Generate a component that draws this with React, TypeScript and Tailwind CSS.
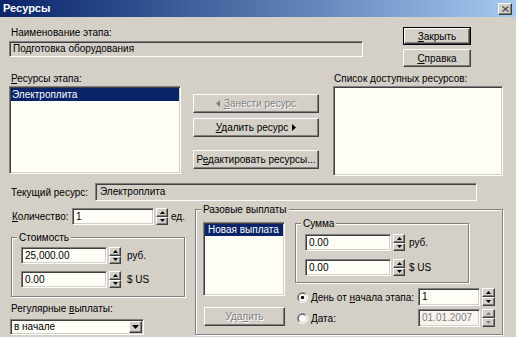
import React from "react";

const sunken =
  "border border-t-[#808080] border-l-[#808080] border-b-white border-r-white shadow-[inset_1px_1px_0_#404040,inset_-1px_-1px_0_#d4d0c8]";
const raised =
  "border border-t-white border-l-white border-b-[#404040] border-r-[#404040] shadow-[inset_-1px_-1px_0_#808080] bg-[#d4d0c8]";
const off = "text-[#808080] [text-shadow:1px_1px_0_#fff]";

function Btn({ className, children, disabled }: { className: string; children: React.ReactNode; disabled?: boolean }) {
  return (
    <div className={`${raised} ${className} flex items-center justify-center ${disabled ? off : ""}`}>
      {children}
    </div>
  );
}

function Tri({ dir, color }: { dir: "up" | "down" | "left" | "right"; color: string }) {
  const d = {
    up: "M3.5 0L7 4H0z",
    down: "M0 0H7L3.5 4z",
    left: "M4 0V7L0 3.5z",
    right: "M0 0L4 3.5L0 7z",
  }[dir];
  const vert = dir === "up" || dir === "down";
  return (
    <svg width={vert ? 7 : 4} height={vert ? 4 : 7} viewBox={vert ? "0 0 7 4" : "0 0 4 7"}>
      <path d={d} fill={color} />
    </svg>
  );
}

function Spin({ className, disabled }: { className: string; disabled?: boolean }) {
  const c = disabled ? "#808080" : "#000";
  return (
    <div className={`flex flex-col ${className}`}>
      <div className={`flex-1 ${raised} flex items-center justify-center`}>
        <svg width="5" height="3" viewBox="0 0 5 3"><path d="M2.5 0L5 3H0z" fill={c} /></svg>
      </div>
      <div className={`flex-1 ${raised} flex items-center justify-center`}>
        <svg width="5" height="3" viewBox="0 0 5 3"><path d="M0 0H5L2.5 3z" fill={c} /></svg>
      </div>
    </div>
  );
}

function Radio({ checked }: { checked?: boolean }) {
  return (
    <svg width="11" height="11" viewBox="0 0 12 12">
      <circle cx="6" cy="6" r="5.5" fill="#fff" />
      <path d="M2.1 9.9A5.5 5.5 0 0 1 9.9 2.1" stroke="#808080" fill="none" />
      <path d="M9.9 2.1A5.5 5.5 0 0 1 2.1 9.9" stroke="#fff" fill="none" />
      <path d="M2.8 9.2A4.5 4.5 0 0 1 9.2 2.8" stroke="#404040" fill="none" />
      <path d="M9.2 2.8A4.5 4.5 0 0 1 2.8 9.2" stroke="#d4d0c8" fill="none" />
      {checked && <circle cx="6" cy="6" r="1.8" fill="#000" />}
    </svg>
  );
}

function Group({ className, label, children }: { className: string; label: string; children: React.ReactNode }) {
  return (
    <div className={`relative border border-[#808080] shadow-[inset_1px_1px_0_#fff,1px_1px_0_#fff] ${className}`}>
      <span className="absolute -top-[7px] left-[5px] bg-[#d4d0c8] px-[2px] leading-[13px]">{label}</span>
      {children}
    </div>
  );
}

export default function App() {
  return (
    <div className="w-[516px] h-[337px] overflow-hidden bg-[#d4d0c8] font-['Liberation_Sans',Arial,sans-serif] text-[10px] leading-[13px] text-black whitespace-nowrap select-none">
      {/* title bar */}
      <div className="h-[17px] flex items-center justify-between bg-linear-to-r from-[#0a246a] to-[#a6caf0] pl-[3px] pr-[4px]">
        <span className="font-bold text-white text-[11px]">Ресурсы</span>
        <div className={`${raised} w-[14px] h-[12px] flex items-center justify-center`}>
          <svg width="7" height="6" viewBox="0 0 7 6">
            <path d="M0.5 0.5L6.5 5.5M6.5 0.5L0.5 5.5" stroke="#505050" strokeWidth="1.4" />
          </svg>
        </div>
      </div>

      {/* name of stage + buttons */}
      <div className="flex h-[50px]">
        <div className="ml-[9px] w-[354px] pt-[9px]">
          <div className="pl-[2px] h-[13px]">Наименование этапа:</div>
          <div className={`mt-[2px] h-[16px] ${sunken} pl-[3px] leading-[14px]`}>Подготовка оборудования</div>
        </div>
        <div className="ml-[40px] pt-[10px] flex flex-col gap-[4px]">
          <div className="border border-black w-[68px] h-[18px] flex">
            <Btn className="flex-1">
              <span><u>З</u>акрыть</span>
            </Btn>
          </div>
          <Btn className="w-[68px] h-[18px]">
            <span><u>С</u>правка</span>
          </Btn>
        </div>
      </div>

      {/* resource lists */}
      <div className="flex h-[109px]">
        <div className="ml-[9px] w-[172px] pt-[5px]">
          <div className="pl-[2px] h-[13px]"><u>Р</u>есурсы этапа:</div>
          <div className={`mt-[1px] h-[88px] ${sunken} bg-[#fffef7] p-[1px]`}>
            <div className="bg-[#0a246a] text-white pl-[1px] h-[13px]">Электроплита</div>
          </div>
        </div>
        <div className="ml-[12px] w-[126px] pt-[27px] flex flex-col">
          <Btn className="h-[19px] gap-[4px]" disabled>
            <Tri dir="left" color="#808080" />
            <span><u>З</u>анести ресурс</span>
          </Btn>
          <Btn className="h-[19px] mt-[5px] gap-[4px]">
            <span><u>У</u>далить ресурс</span>
            <Tri dir="right" color="#000" />
          </Btn>
          <Btn className="h-[19px] mt-[13px]">
            <span>Р<u>е</u>дактировать ресурсы...</span>
          </Btn>
        </div>
        <div className="ml-[14px] w-[170px] pt-[5px]">
          <div className="pl-[1px] h-[13px]">Список доступных ресурсов:</div>
          <div className={`mt-[1px] h-[90px] ${sunken} bg-[#fffef7]`} />
        </div>
      </div>

      {/* current resource */}
      <div className="flex items-center mt-[7px] h-[18px]">
        <div className="ml-[11px] w-[84px]">Текущий ресурс:</div>
        <div className={`w-[382px] h-[18px] ${sunken} pl-[4px] leading-[16px]`}>Электроплита</div>
      </div>

      {/* bottom */}
      <div className="flex">
        <div className="ml-[9px] w-[177px]">
          <div className="flex items-center mt-[7px] h-[17px]">
            <div className="ml-[3px] w-[60px]"><u>К</u>оличество:</div>
            <div className={`w-[82px] h-[17px] ${sunken} bg-[#fffef7] pl-[3px] leading-[15px]`}>1</div>
            <Spin className="ml-[2px] w-[12px] h-[17px]" />
            <span className="ml-[3px]">ед.</span>
          </div>
          <Group className="mt-[12px] ml-[2px] w-[174px] h-[60px] pt-[9px] pl-[9px]" label="Стоимость">
            <div className="flex items-center h-[17px]">
              <div className={`w-[86px] h-[17px] ${sunken} bg-[#fffef7] pl-[3px] leading-[15px]`}>25,000.00</div>
              <Spin className="ml-[2px] w-[12px] h-[17px]" />
              <span className="ml-[6px]">руб.</span>
            </div>
            <div className="flex items-center h-[17px] mt-[7px]">
              <div className={`w-[86px] h-[17px] ${sunken} bg-[#fffef7] pl-[3px] leading-[15px]`}>0.00</div>
              <Spin className="ml-[2px] w-[12px] h-[17px]" />
              <span className="ml-[6px]">$ US</span>
            </div>
          </Group>
          <div className="mt-[5px] ml-[2px] h-[13px]">Регулярные <u>в</u>ыплаты:</div>
          <div className={`mt-[4px] ml-[1px] w-[134px] h-[16px] ${sunken} bg-[#fffef7] flex items-stretch p-[1px]`}>
            <div className="flex-1 pl-[2px] leading-[12px]">в начале</div>
            <div className={`w-[13px] ${raised} flex items-center justify-center`}>
              <Tri dir="down" color="#000" />
            </div>
          </div>
        </div>

        <Group className="mt-[8px] ml-[9px] w-[308px] h-[126px] flex" label="Разовые выплаты">
          <div className="pl-[7px] pt-[12px]">
            <div className={`w-[82px] h-[74px] ${sunken} bg-[#fffef7] p-[1px]`}>
              <div className="bg-[#0a246a] text-white pl-[3px] h-[12px] leading-[12px]">Новая выплата</div>
            </div>
            <Btn className="mt-[11px] ml-[1px] w-[81px] h-[19px]" disabled>
              <span>Уда<u>л</u>ить</span>
            </Btn>
          </div>
          <div className="ml-[10px] pt-[13px]">
            <Group className="w-[174px] h-[60px] pt-[10px] pl-[9px]" label="Сумма">
              <div className="flex items-center h-[17px]">
                <div className={`w-[86px] h-[17px] ${sunken} bg-[#fffef7] pl-[3px] leading-[15px]`}>0.00</div>
                <Spin className="ml-[2px] w-[12px] h-[17px]" />
                <span className="ml-[4px]">руб.</span>
              </div>
              <div className="flex items-center h-[17px] mt-[8px]">
                <div className={`w-[86px] h-[17px] ${sunken} bg-[#fffef7] pl-[3px] leading-[15px]`}>0.00</div>
                <Spin className="ml-[2px] w-[12px] h-[17px]" />
                <span className="ml-[4px]">$ US</span>
              </div>
            </Group>
            <div className="flex items-center mt-[5px] h-[18px]">
              <div className="ml-[2px] w-[121px] flex items-center gap-[3px]">
                <Radio checked />
                <span>День от <u>н</u>ачала этапа:</span>
              </div>
              <div className={`w-[62px] h-[18px] ${sunken} bg-[#fffef7] pl-[3px] leading-[16px]`}>1</div>
              <Spin className="ml-[2px] w-[13px] h-[18px]" />
            </div>
            <div className="flex items-center mt-[3px] h-[18px]">
              <div className="ml-[2px] w-[121px] flex items-center gap-[3px]">
                <Radio />
                <span><u>Д</u>ата:</span>
              </div>
              <div className={`w-[62px] h-[18px] ${sunken} bg-[#f7f5ee] pl-[3px] leading-[16px] text-[#808080]`}>01.01.2007</div>
              <Spin className="ml-[2px] w-[13px] h-[18px]" disabled />
            </div>
          </div>
        </Group>
      </div>
    </div>
  );
}
